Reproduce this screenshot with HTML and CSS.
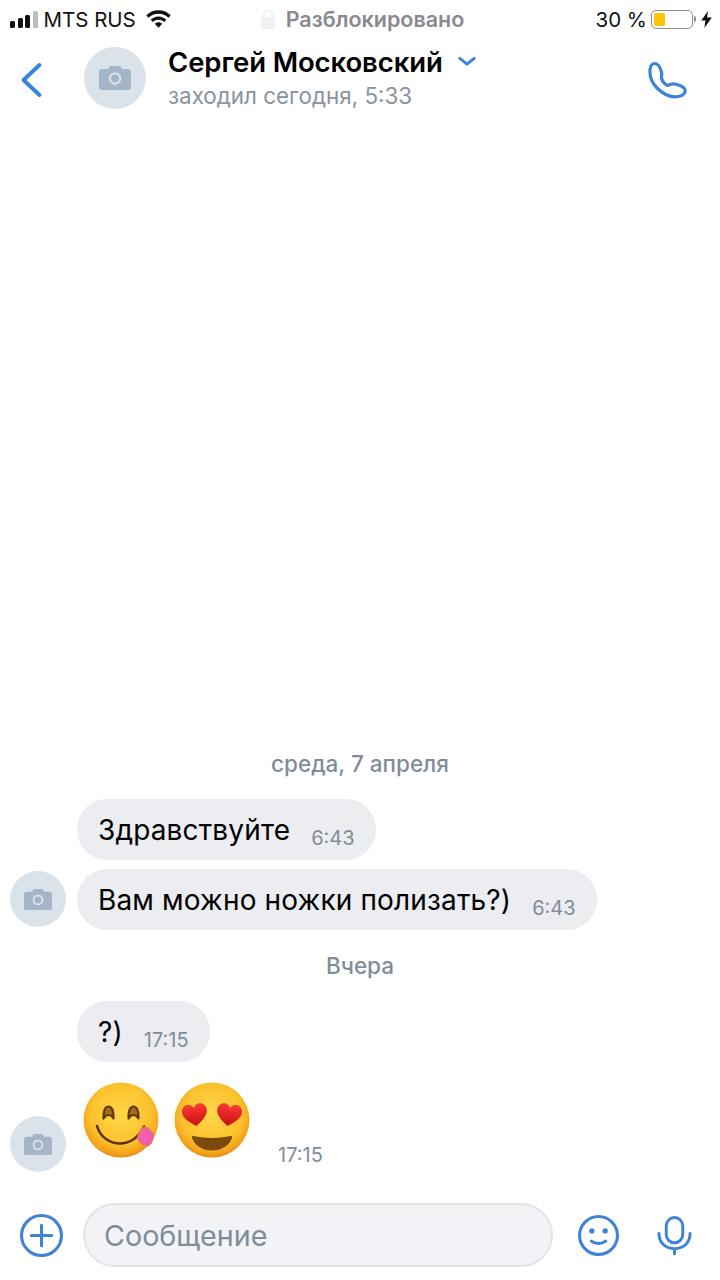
FILE: index.html
```html
<!DOCTYPE html>
<html lang="ru">
<head>
<meta charset="utf-8">
<title>Сергей Московский</title>
<link rel="stylesheet" href="styles.css">
</head>
<body>
<svg class="defs" width="0" height="0" aria-hidden="true">
  <defs>
    <symbol id="camera" viewBox="0 0 32 24">
      <path fill="#a3b5c7" d="M3 3h6l2-3h10l2 3h6a3 3 0 0 1 3 3v15a3 3 0 0 1-3 3H3a3 3 0 0 1-3-3V6a3 3 0 0 1 3-3z"/>
      <circle cx="16" cy="12.5" r="6.2" fill="#dbe3ea"/>
      <circle cx="16" cy="12.5" r="4" fill="#a3b5c7"/>
    </symbol>
    <radialGradient id="face" cx="50%" cy="42%" r="58%">
      <stop offset="0" stop-color="#ffd84a"/>
      <stop offset=".7" stop-color="#fcc12c"/>
      <stop offset=".93" stop-color="#f2a01a"/>
      <stop offset="1" stop-color="#e08a12"/>
    </radialGradient>
    <linearGradient id="heart" x1="0" y1="0" x2="0" y2="1">
      <stop offset="0" stop-color="#fb3a34"/>
      <stop offset="1" stop-color="#c90f14"/>
    </linearGradient>
    <linearGradient id="tongue" x1="0" y1="0" x2="1" y2="1">
      <stop offset="0" stop-color="#f2689c"/>
      <stop offset="1" stop-color="#f84fc0"/>
    </linearGradient>
  </defs>
</svg>

<header class="top">
  <div class="status">
    <div class="status-left">
      <span class="signal"><i class="s1"></i><i class="s2"></i><i class="s3"></i><i class="s4"></i></span>
      <span class="carrier">MTS RUS</span>
      <svg class="wifi" viewBox="0 0 26 18"><path fill="#111" d="M13 0C8 0 3.600 2 .3 5.200l2.400 2.500C5.400 5 9 3.500 13 3.500s7.600 1.500 10.300 4.200l2.400-2.500C22.400 2 18 0 13 0z"/><path fill="#111" d="M13 6.300c-3.200 0-6.100 1.300-8.200 3.400l2.500 2.500c1.500-1.500 3.500-2.400 5.700-2.400s4.200.9 5.700 2.400l2.500-2.500c-2.100-2.100-5-3.400-8.200-3.400z"/><path fill="#111" d="M13 12.400c-1.500 0-2.900.6-3.900 1.600L13 18l3.900-4c-1-1-2.400-1.600-3.900-1.600z"/></svg>
    </div>
    <div class="status-mid">
      <svg class="lock" viewBox="0 0 14 20"><path fill="none" stroke="#f1f1f1" stroke-width="2" d="M3 9V5.500a4 4 0 0 1 8 0V9"/><rect y="8" width="14" height="12" rx="1.500" fill="#f1f1f1"/></svg>
      <span>Разблокировано</span>
    </div>
    <div class="status-right">
      <span class="percent">30 %</span>
      <span class="battery"><span class="battery-fill"></span></span>
      <span class="battery-cap"></span>
      <svg class="bolt" viewBox="0 0 10 16"><path fill="#111" d="M6.500 0 0 9h4l-1 7 7-10H5.500z"/></svg>
    </div>
  </div>
  <div class="nav">
    <svg class="back" viewBox="0 0 22 36"><path fill="none" stroke="#3d83d8" stroke-width="4" stroke-linecap="round" stroke-linejoin="round" d="M19 3 3 18l16 15"/></svg>
    <div class="avatar avatar-lg"><svg class="cam cam-lg"><use href="#camera"/></svg></div>
    <div class="peer">
      <div class="peer-name"><span>Сергей Московский</span>
        <svg class="chev" viewBox="0 0 20 12"><path fill="none" stroke="#3d83d8" stroke-width="3.200" stroke-linecap="round" stroke-linejoin="round" d="M2 2.500 10 9l8-6.500"/></svg>
      </div>
      <div class="peer-seen">заходил сегодня, 5:33</div>
    </div>
    <svg class="call" viewBox="7 5 40 40"><path fill="none" stroke="#3d83d8" stroke-width="3.200" stroke-linejoin="round" d="M10 15c-.5 7 2.500 13.500 7 18 6 6 13.500 10 21.500 8.500 4.500-.8 7-3.500 6.700-6-.7-3-4.200-5-8.200-6-5-1.500-7.500 0-9.500 1-2-1-5-4-6-7 0-2 .5-3.500 0-6.500-1-4-3.500-8.500-7-8.500-2.800 0-4.300 3.500-4.500 6.500z"/></svg>
  </div>
</header>

<main class="chat">
  <div class="day day-first">среда, 7 апреля</div>
  <div class="group">
    <div class="avatar avatar-sm"><svg class="cam cam-sm"><use href="#camera"/></svg></div>
    <div class="bubbles">
      <div class="bubble"><span class="text">Здравствуйте</span><span class="time">6:43</span></div>
      <div class="bubble"><span class="text">Вам можно ножки полизать?)</span><span class="time">6:43</span></div>
    </div>
  </div>
  <div class="day day-second">Вчера</div>
  <div class="group">
    <div class="avatar avatar-sm avatar-blank"></div>
    <div class="bubbles">
      <div class="bubble"><span class="text">?)</span><span class="time">17:15</span></div>
    </div>
  </div>
  <div class="group group-emoji">
    <div class="avatar avatar-sm"><svg class="cam cam-sm"><use href="#camera"/></svg></div>
    <div class="emoji-row">
      <svg class="emoji" viewBox="0 0 76 76" role="img" aria-label="😋">
        <circle cx="38" cy="38" r="37.500" fill="url(#face)"/>
        <path fill="#a76c14" stroke="#5e3a0a" stroke-width="2.200" stroke-linejoin="round" d="M20.500 36.500c-.3-8 1.800-12 5-12s5.300 4 5 12c-1.300-2.500-3-3.500-5-3.500s-3.700 1-5 3.500z"/>
        <path fill="#a76c14" stroke="#5e3a0a" stroke-width="2.200" stroke-linejoin="round" d="M45.500 36.500c-.3-8 1.800-12 5-12s5.300 4 5 12c-1.300-2.500-3-3.500-5-3.500s-3.700 1-5 3.500z"/>
        <path fill="none" stroke="#5a3208" stroke-width="2.600" stroke-linecap="round" d="M14 44c3 11 13 18 24 17.500 10-.5 18-7 23-17"/>
        <path fill="url(#tongue)" stroke="#d98a3a" stroke-width="1" d="M58 46.500c2-1.800 5-2 7-.5l4 3.500c1.800 1.800 2.200 4 1.500 6l-1.800 5c-1 2.500-3.500 4-6 3.300-3.500-1-7-3.500-8-6.500-.7-2 .5-4.500 1.500-6.300z"/>
      </svg>
      <svg class="emoji" viewBox="0 0 76 76" role="img" aria-label="😍">
        <circle cx="38" cy="38" r="37.500" fill="url(#face)"/>
        <path transform="translate(21 33.500) rotate(-8)" fill="url(#heart)" d="M0 10.500C-7 6-12.500 1-12.500-4.500c0-4 3-7 6.500-7 2.500 0 5 1.500 6 4 1-2.500 3.500-4 6-4 3.500 0 6.500 3 6.500 7 0 5.500-5.500 10.500-12.500 15z"/>
        <path transform="translate(55 33.500) rotate(8)" fill="url(#heart)" d="M0 10.500C-7 6-12.500 1-12.500-4.500c0-4 3-7 6.500-7 2.500 0 5 1.500 6 4 1-2.500 3.500-4 6-4 3.500 0 6.500 3 6.500 7 0 5.500-5.500 10.500-12.500 15z"/>
        <path fill="#7c4a0a" d="M19 54c13 2.600 25 2.600 38 0 1-.2 1.500.5 1.200 1.400C55.500 63.500 47.500 68.500 38 68.500s-17.500-5-20.200-13.100c-.3-.9.200-1.600 1.200-1.400z"/>
      </svg>
      <span class="time time-emoji">17:15</span>
    </div>
  </div>
</main>

<footer class="composer">
  <svg class="plus" viewBox="0 0 42 42"><circle cx="21" cy="21" r="19.500" fill="none" stroke="#3d83d8" stroke-width="3"/><path stroke="#3d83d8" stroke-width="3" stroke-linecap="round" d="M21 11v20M11 21h20"/></svg>
  <div class="field">Сообщение</div>
  <svg class="smile" viewBox="0 0 40 40"><circle cx="20" cy="20" r="18.500" fill="none" stroke="#3d83d8" stroke-width="3"/><circle cx="13.500" cy="15.500" r="2.600" fill="#3d83d8"/><circle cx="26.500" cy="15.500" r="2.600" fill="#3d83d8"/><path fill="none" stroke="#3d83d8" stroke-width="3" stroke-linecap="round" d="M13 25.500c4 3 10 3 14 0"/></svg>
  <svg class="mic" viewBox="0 0 36 40"><rect x="9.500" y="1.500" width="17" height="26" rx="8.500" fill="none" stroke="#3d83d8" stroke-width="3"/><path fill="none" stroke="#3d83d8" stroke-width="3" stroke-linecap="round" d="M2 18c0 9.500 6.500 15.500 16 15.500S34 27.500 34 18M18 33.500V39"/></svg>
</footer>
</body>
</html>
```

FILE: styles.css
```css
* { box-sizing: border-box; }
html, body { margin: 0; padding: 0; }
body {
  width: 720px;
  height: 1280px;
  overflow: hidden;
  display: flex;
  flex-direction: column;
  background: #fff;
  color: #000;
  font-family: Inter, "Liberation Sans", sans-serif;
}
.defs { position: absolute; }

.top { flex: none; }
.status {
  height: 38px;
  padding: 0 8px 0 10px;
  display: grid;
  grid-template-columns: 1fr auto 1fr;
  align-items: center;
  font-size: 20.5px;
  color: #111;
}
.status-left { display: flex; align-items: center; }
.signal { display: flex; align-items: flex-end; gap: 2.500px; height: 17px; margin-right: 6px; }
.signal i { display: block; width: 5px; background: #111; border-radius: 1.500px; }
.s1 { height: 7px; }
.s2 { height: 10px; }
.s3 { height: 13px; }
.signal .s4 { height: 17px; background: #bdbdbd; }
.wifi { width: 25px; height: 18px; margin-left: 10px; }
.status-mid { display: flex; align-items: center; gap: 11px; margin-left: 3px; color: #8a8a8e; font-weight: 600; font-size: 21.500px; }
.lock { width: 14px; height: 20px; }
.status-right { display: flex; align-items: center; justify-content: flex-end; }
.percent { margin-right: 4px; }
.battery {
  width: 42px;
  height: 19px;
  padding: 2px;
  border: 1.500px solid #8e8e8e;
  border-radius: 5px;
  display: block;
}
.battery-fill { display: block; width: 11px; height: 100%; background: #fcc40b; border-radius: 1.500px; }
.battery-cap { width: 2px; height: 6px; background: #8e8e8e; margin-left: 1px; border-radius: 0 2px 2px 0; }
.bolt { width: 11px; height: 17px; margin-left: 5px; }

.nav { height: 82px; padding: 0 33px 3px 20px; display: flex; align-items: center; }
.back { width: 23px; height: 36px; flex: none; margin-top: 5px; }
.avatar { border-radius: 50%; background: #dbe3ea; display: flex; align-items: center; justify-content: center; flex: none; }
.avatar-lg { width: 62px; height: 62px; margin-left: 41px; }
.avatar-sm { width: 56px; height: 56px; }
.avatar-blank { background: none; }
.cam-lg { width: 32px; height: 24px; }
.cam-sm { width: 28px; height: 21px; }
.peer { margin: 2px 0 0 22px; flex: 1; }
.peer-name { display: flex; align-items: center; font-size: 27.500px; font-weight: 600; line-height: 34px; letter-spacing: -.1px; }
.chev { width: 18px; height: 11px; margin-left: 15px; margin-top: -2px; }
.peer-seen { font-size: 22.400px; line-height: 32px; margin-top: 1px; color: #8b939c; }
.call { width: 40px; height: 40px; flex: none; margin-top: 5px; }

.chat { flex: 1; min-height: 0; display: flex; flex-direction: column; justify-content: flex-end; }
.day { text-align: center; font-size: 22.500px; font-weight: 500; line-height: 26px; color: #818c99; }
.day-first { margin-bottom: 22px; }
.day-second { margin: 23px 0 22px; }
.group { display: flex; align-items: flex-end; padding-left: 10px; gap: 11px; }
.group .avatar { margin-bottom: 3px; }
.bubbles { display: flex; flex-direction: column; align-items: flex-start; gap: 9px; }
.bubble {
  height: 61px;
  padding: 0 21px;
  border-radius: 30px;
  background: #ebedf1;
  display: flex;
  align-items: center;
}
.text { font-size: 28px; letter-spacing: .15px; }
.time { font-size: 20px; line-height: 24px; color: #818c99; margin-left: 21px; padding-top: 16px; }
.group-emoji { margin-top: 20px; margin-bottom: 30px; }
.group-emoji .avatar { margin-bottom: 0; }
.emoji-row { display: flex; align-items: flex-start; gap: 15px; margin-left: 6px; margin-bottom: 5px; }
.emoji { width: 76px; height: 76px; flex: none; }
.time-emoji { margin-left: 13px; padding-top: 61px; }

.composer { flex: none; height: 78px; padding: 0 28px 12px 20px; display: flex; align-items: center; }
.plus { width: 43px; height: 43px; flex: none; }
.field {
  flex: 1;
  height: 64px;
  margin: 0 25px 0 20px;
  padding-left: 19px;
  border: 2px solid #e2e4e8;
  border-radius: 32px;
  background: #f1f3f6;
  display: flex;
  align-items: center;
  font-size: 28.700px;
  color: #818c99;
}
.smile { width: 41px; height: 41px; flex: none; }
.mic { width: 35px; height: 41px; margin-left: 38px; flex: none; }
```
